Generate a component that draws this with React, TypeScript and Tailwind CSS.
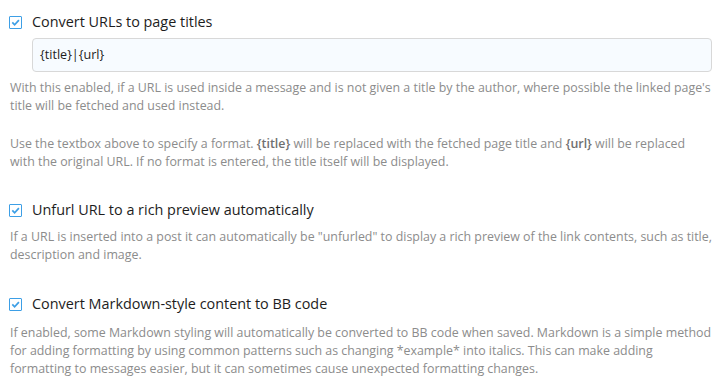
import React from "react";

function Check() {
  return (
    <span className="inline-flex h-[13px] w-[13px] shrink-0 items-center justify-center border border-[#3d9fe6] bg-white rounded-[1px]">
      <svg width="9" height="9" viewBox="0 0 9 9">
        <path d="M1.3 4.4 L3.6 6.8 L7.9 2.1" fill="none" stroke="#3d9fe6" strokeWidth="1.7" />
      </svg>
    </span>
  );
}

function Option({ title, children }: { title: string; children: React.ReactNode }) {
  return (
    <div>
      <label className="flex items-center gap-[10px] pl-[9px] text-[14.4px] leading-[20px] text-[#1d1d1d]">
        <Check />
        <span>{title}</span>
      </label>
      <div className="pl-[10px] pr-[10px]">{children}</div>
    </div>
  );
}

export default function App() {
  return (
    <div
      className="h-[387px] w-[722px] overflow-hidden bg-white pt-[12px]"
      style={{ fontFamily: '"Open Sans", "Noto Sans", sans-serif' }}
    >
      <Option title="Convert URLs to page titles">
        <div className="ml-[22px] mt-[6px] flex h-[34px] items-center rounded-[4px] border border-[#d8d8d8] bg-[#f7fbff] px-[7px] text-[12.6px] text-[#1d1d1d]">
          {"{title}|{url}"}
        </div>
        <p className="mt-[7px] text-[12.4px] leading-[18px] text-[#8c8c8c]">
          With this enabled, if a URL is used inside a message and is not given a title by the author, where possible the linked page's title will be fetched and used instead.
        </p>
        <p className="mt-[20px] text-[12.4px] leading-[18px] text-[#8c8c8c]">
          Use the textbox above to specify a format. <b className="font-semibold text-[#707070]">{"{title}"}</b> will be replaced with the fetched page title and <b className="font-semibold text-[#707070]">{"{url}"}</b> will be replaced with the original URL. If no format is entered, the title itself will be displayed.
        </p>
      </Option>
      <div className="mt-[29px]">
        <Option title="Unfurl URL to a rich preview automatically">
          <p className="mt-[8px] text-[12.4px] leading-[18px] text-[#8c8c8c]">
            If a URL is inserted into a post it can automatically be "unfurled" to display a rich preview of the link contents, such as title, description and image.
          </p>
        </Option>
      </div>
      <div className="mt-[30px]">
        <Option title="Convert Markdown-style content to BB code">
          <p className="mt-[10px] text-[12.4px] leading-[18px] text-[#8c8c8c]">
            If enabled, some Markdown styling will automatically be converted to BB code when saved. Markdown is a simple method for adding formatting by using common patterns such as changing *example* into italics. This can make adding formatting to messages easier, but it can sometimes cause unexpected formatting changes.
          </p>
        </Option>
      </div>
    </div>
  );
}
